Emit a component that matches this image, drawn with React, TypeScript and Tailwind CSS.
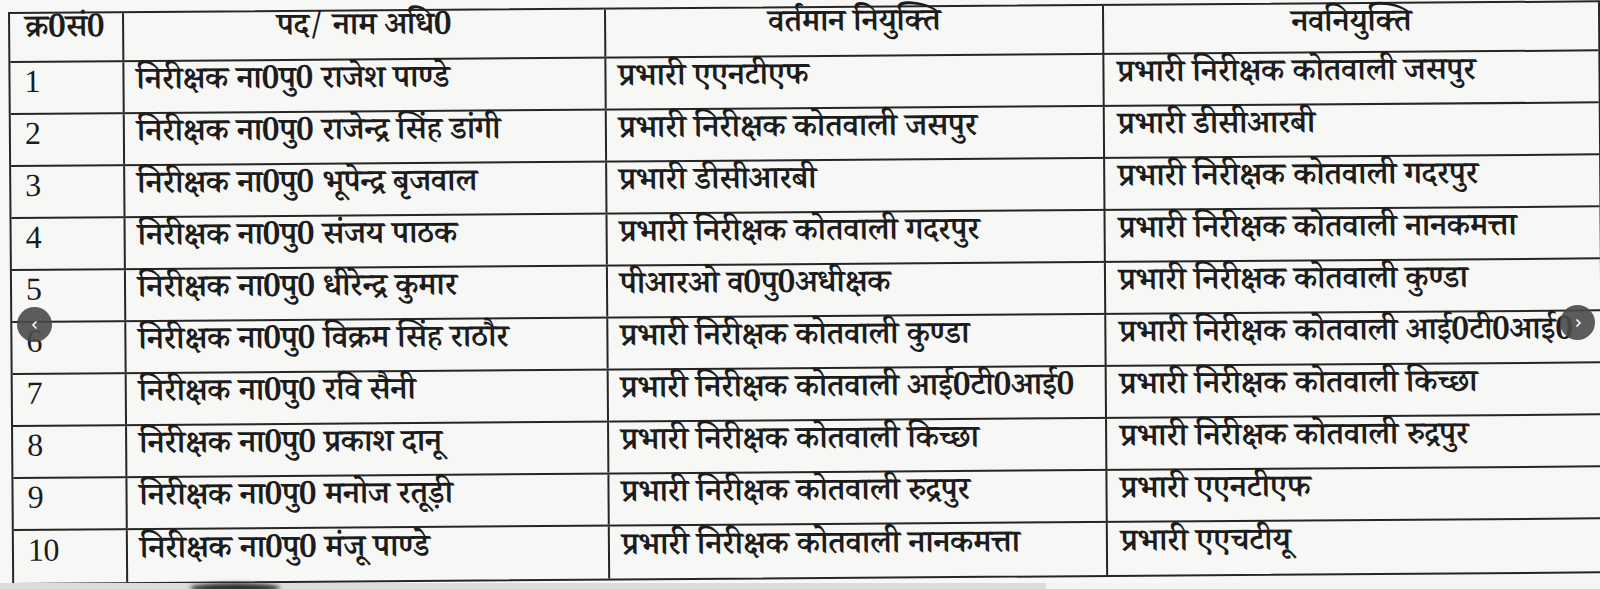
import React from "react";

const rows: [string, string, string, string][] = [
  ["1", "निरीक्षक ना0पु0 राजेश पाण्डे", "प्रभारी एएनटीएफ", "प्रभारी निरीक्षक कोतवाली जसपुर"],
  ["2", "निरीक्षक ना0पु0 राजेन्द्र सिंह डांगी", "प्रभारी निरीक्षक कोतवाली जसपुर", "प्रभारी डीसीआरबी"],
  ["3", "निरीक्षक ना0पु0 भूपेन्द्र बृजवाल", "प्रभारी डीसीआरबी", "प्रभारी निरीक्षक कोतवाली गदरपुर"],
  ["4", "निरीक्षक ना0पु0 संजय पाठक", "प्रभारी निरीक्षक कोतवाली गदरपुर", "प्रभारी निरीक्षक कोतवाली नानकमत्ता"],
  ["5", "निरीक्षक ना0पु0 धीरेन्द्र कुमार", "पीआरओ व0पु0अधीक्षक", "प्रभारी निरीक्षक कोतवाली कुण्डा"],
  ["6", "निरीक्षक ना0पु0 विक्रम सिंह राठौर", "प्रभारी निरीक्षक कोतवाली कुण्डा", "प्रभारी निरीक्षक कोतवाली आई0टी0आई0"],
  ["7", "निरीक्षक ना0पु0 रवि सैनी", "प्रभारी निरीक्षक कोतवाली आई0टी0आई0", "प्रभारी निरीक्षक कोतवाली किच्छा"],
  ["8", "निरीक्षक ना0पु0 प्रकाश दानू", "प्रभारी निरीक्षक कोतवाली किच्छा", "प्रभारी निरीक्षक कोतवाली रुद्रपुर"],
  ["9", "निरीक्षक ना0पु0 मनोज रतूड़ी", "प्रभारी निरीक्षक कोतवाली रुद्रपुर", "प्रभारी एएनटीएफ"],
  ["10", "निरीक्षक ना0पु0 मंजू पाण्डे", "प्रभारी निरीक्षक कोतवाली नानकमत्ता", "प्रभारी एएचटीयू"],
];

const font = {
  fontFamily:
    '"Noto Serif Devanagari", "Noto Sans Devanagari", "Liberation Serif", "Noto Sans", serif',
};

const cols = "grid grid-cols-[114px_482px_498px_1fr]";

export default function App() {
  return (
    <div className="relative w-[1600px] h-[589px] overflow-hidden bg-[#f7f7f5]">
      <div className="pl-[8px] pt-[12px]">
        <div
          className="w-[1592px] origin-top-left rotate-[-0.42deg] border-2 border-[#262626] text-[#1c1c1c] text-[32px] font-semibold leading-none tracking-[-0.4px]"
          style={font}
        >
          <div className={`${cols} h-[49px] border-b-2 border-[#262626]`}>
            <div className="flex items-center pl-[15px] pb-[11px] border-r-2 border-[#262626]">क्र0सं0</div>
            <div className="flex items-center justify-center pb-[11px] border-r-2 border-[#262626]">पद/ नाम अधि0</div>
            <div className="flex items-center justify-center pb-[11px] border-r-2 border-[#262626]">वर्तमान नियुक्ति</div>
            <div className="flex items-center justify-center pb-[3px]">नवनियुक्ति</div>
          </div>
          {rows.map((r, i) => (
            <div
              key={i}
              className={`${cols} h-[52px] ${i < rows.length - 1 ? "border-b-2 border-[#262626]" : ""}`}
            >
              <div className="flex items-center pl-[14px] pb-[15px] border-r-2 border-[#262626] font-['Liberation_Serif'] font-normal text-[32px]">
                {r[0]}
              </div>
              <div className="flex items-center pl-[12px] pb-[6px] border-r-2 border-[#262626]">{r[1]}</div>
              <div className="flex items-center pl-[12px] pb-[6px] border-r-2 border-[#262626]">{r[2]}</div>
              <div className="flex items-center pl-[13px] pb-[6px]">{r[3]}</div>
            </div>
          ))}
        </div>
      </div>
      <div className="absolute left-0 right-0 bottom-0 h-[6px] bg-[#dcdcdc]">
        <div className="absolute left-[190px] top-0 w-[90px] h-[10px] rounded-[50%] bg-[#2e2e2e] blur-[2px]" />
        <div className="absolute left-[1046px] top-0 right-0 h-[6px] bg-[#f4f4f4]" />
      </div>
      <button className="absolute left-[17px] top-[307px] w-[35px] h-[35px] rounded-full bg-[#4a4a4a]/90 flex items-center justify-center">
        <svg width="12" height="12" viewBox="0 0 12 12" fill="none" stroke="white" strokeWidth="1.6">
          <path d="M7.5 2.5 L4 6 L7.5 9.5" />
        </svg>
      </button>
      <button className="absolute left-[1560px] top-[305px] w-[35px] h-[35px] rounded-full bg-[#4a4a4a]/90 flex items-center justify-center">
        <svg width="12" height="12" viewBox="0 0 12 12" fill="none" stroke="white" strokeWidth="1.6">
          <path d="M4.5 2.5 L8 6 L4.5 9.5" />
        </svg>
      </button>
    </div>
  );
}
